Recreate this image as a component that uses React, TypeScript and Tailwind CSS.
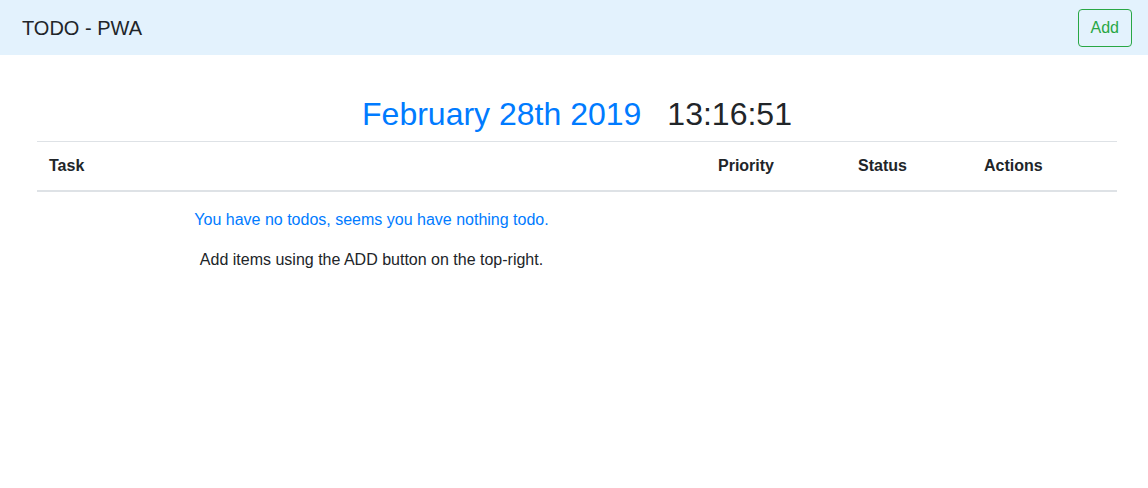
export default function App() {
  return (
    <div className="min-h-screen bg-white text-[#212529] text-base leading-6" style={{ fontFamily: '"Liberation Sans", Arial, sans-serif' }}>
      <nav className="flex items-center justify-between bg-[#e3f2fd] pl-[22px] pr-4 py-2 h-[55px]">
        <span className="text-xl leading-[30px]">TODO - PWA</span>
        <button className="h-[38px] px-3 rounded border border-[#28a745] text-[#28a745] text-base leading-6">
          Add
        </button>
      </nav>
      <div className="ml-[37px] mr-[31px]">
        <h2 className="mt-[40px] mb-2 text-center text-[32px] leading-[38px]">
          <span className="text-[#007bff]">February 28th 2019</span>
          <span className="ml-[26px]">13:16:51</span>
        </h2>
        <table className="w-full border-collapse">
          <thead>
            <tr className="border-t border-[#dee2e6]">
              <th className="text-left font-bold p-3 border-b-2 border-[#dee2e6]">Task</th>
              <th className="text-left font-bold p-3 border-b-2 border-[#dee2e6] w-[140px]">Priority</th>
              <th className="text-left font-bold p-3 border-b-2 border-[#dee2e6] w-[126px]">Status</th>
              <th className="text-left font-bold p-3 border-b-2 border-[#dee2e6] w-[145px]">Actions</th>
            </tr>
          </thead>
          <tbody>
            <tr>
              <td className="text-center px-3 pt-4">
                <p className="mb-4 text-[#007bff]">You have no todos, seems you have nothing todo.</p>
                <p>Add items using the ADD button on the top-right.</p>
              </td>
              <td></td>
              <td></td>
              <td></td>
            </tr>
          </tbody>
        </table>
      </div>
    </div>
  );
}
